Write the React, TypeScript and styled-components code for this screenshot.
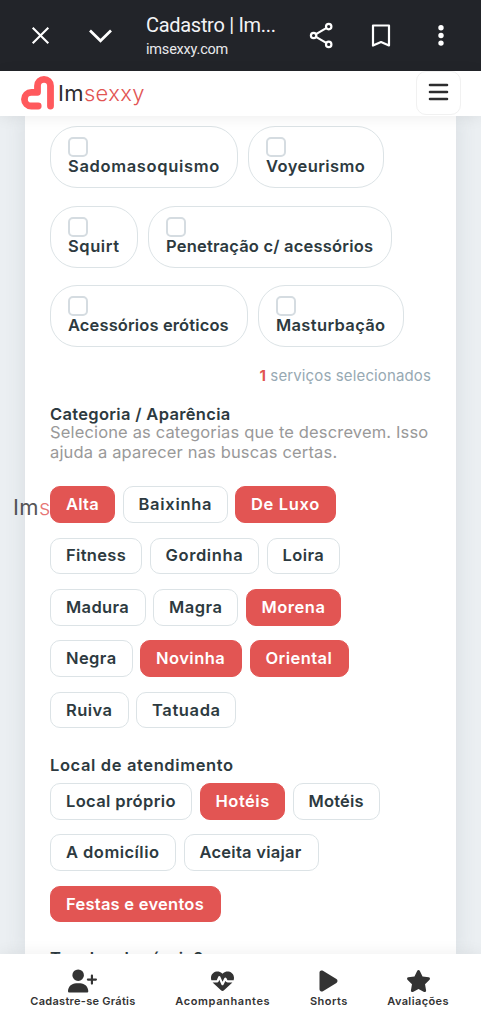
import React from 'react';
import styled, { createGlobalStyle } from 'styled-components';
import { FaUserPlus, FaHeartPulse, FaPlay, FaStar } from 'react-icons/fa6';

const Global = createGlobalStyle`
  *{box-sizing:border-box}
  body{margin:0;background:#ebeff2;font-family:Inter,"Open Sans",sans-serif;color:#2d3a40}
`;
const Screen = styled.div`width:481px;height:1024px;display:flex;flex-direction:column;overflow:hidden;position:relative;`;
const Bar = styled.header`height:71px;flex:none;background:#222429;display:flex;align-items:center;color:#fff;`;
const Glyph = styled.svg<{ $l: number }>`flex:none;margin-left:${p => p.$l}px;overflow:visible;`;
const Titles = styled.div`width:136px;margin-left:34px;font-family:Roboto,sans-serif;white-space:nowrap;`;
const PageTitle = styled.div`font-size:20px;line-height:24px;margin-top:4px;color:#f3f3f6;letter-spacing:-.3px;`;
const Url = styled.div`font-size:14.5px;line-height:26px;color:#e9e9ec;letter-spacing:-.2px;`;
const Head = styled.div`height:45px;flex:none;background:#fff;display:flex;justify-content:space-between;padding:0 20px;position:relative;z-index:1;box-shadow:0 2px 14px rgba(0,0,0,.07);`;
const Brand = styled.div`display:flex;align-items:flex-start;padding:4px 0 0 1px;`;
const Word = styled.span`display:block;font-size:22px;line-height:37px;font-weight:400;color:#2c2c2e;letter-spacing:.35px;margin-left:2px;white-space:nowrap;
  em{font-style:normal;font-weight:300;color:#e25553}`;
const MenuBtn = styled.button`width:45px;height:44px;padding:0 0 2px;border:1px solid #f1f1f1;border-radius:10px;background:#fff;display:flex;align-items:center;justify-content:center;`;
const Body = styled.main`flex:1;min-height:0;padding:0 25px;position:relative;`;
const Card = styled.section`background:#fff;height:838px;padding:10px 25px 0;box-shadow:0 0 20px rgba(70,90,105,.12);overflow:hidden;`;
const Services = styled.div`display:flex;flex-direction:column;gap:17.5px;`;
const Row = styled.div<{ $gap: number }>`display:flex;gap:${p => p.$gap}px;`;
const Service = styled.label<{ $w: number; $s: number }>`width:${p => p.$w}px;height:62px;border:1px solid #dce3e6;border-radius:27px;padding:10px 0 0 17px;font-size:16.5px;font-weight:600;line-height:19px;letter-spacing:${p => p.$s - .28}px;white-space:nowrap;
  i{display:block;width:20px;height:20px;border:2px solid #d5dce1;border-radius:5px;}`;
const Count = styled.p`margin:19px 0 0;text-align:right;font-size:15px;line-height:20px;color:#97a9b3;letter-spacing:.13px;b{color:#e25553}`;
const Heading = styled.h2<{ $top: number; $s: number }>`margin:${p => p.$top}px 0 0;font-size:16.5px;line-height:19px;font-weight:600;letter-spacing:${p => p.$s - .28}px;white-space:nowrap;`;
const Help = styled.p`margin:-1px 0 0;font-size:16.5px;line-height:19.5px;color:#999;white-space:nowrap;letter-spacing:.15px;
  span{display:block}`;
const Chips = styled.div<{ $top: number }>`margin-top:${p => p.$top}px;display:flex;flex-direction:column;gap:14.9px;`;
const Chip = styled.button<{ $w: number; $on?: boolean; $s: number }>`width:${p => p.$w}px;height:36.5px;padding:0 0 1px 15px;text-align:left;border-radius:10px;border:1px solid ${p => (p.$on ? '#e25553' : '#dce3e6')};background:${p => (p.$on ? '#e25553' : '#fff')};color:${p => (p.$on ? '#fff' : '#2d3a40')};font:600 16.5px Inter,sans-serif;letter-spacing:${p => p.$s - .28}px;white-space:nowrap;`;
const Ghost = styled.div`position:absolute;left:11px;top:373px;width:39px;overflow:hidden;opacity:.8;`;
const Nav = styled.nav`height:70px;flex:none;background:#fff;position:relative;z-index:1;box-shadow:0 -2px 14px rgba(0,0,0,.06);display:flex;padding:15px 0 0 23px;`;
const Tab = styled.a<{ $w: number; $s: number }>`width:${p => p.$w}px;display:flex;flex-direction:column;align-items:center;font-size:11px;font-weight:600;color:#333;letter-spacing:${p => p.$s}px;white-space:nowrap;line-height:14px;gap:1px;
  svg{height:24px;flex:none}`;

type C = [string, number, number, boolean?];
const services: C[][] = [
  [['Sadomasoquismo', 188, .94], ['Voyeurismo', 136, .7]],
  [['Squirt', 88, .85], ['Penetração c/ acessórios', 244, .48]],
  [['Acessórios eróticos', 198, .4], ['Masturbação', 146, .62]],
];
const looks: C[][] = [
  [['Alta', 65, .55, true], ['Baixinha', 105, 1], ['De Luxo', 100.5, .94, true]],
  [['Fitness', 92, .6], ['Gordinha', 109.5, .9], ['Loira', 73, .7]],
  [['Madura', 95.5, .65], ['Magra', 85, .8], ['Morena', 95.5, .8, true]],
  [['Negra', 82.5, .7], ['Novinha', 102, .75, true], ['Oriental', 99.5, .7, true]],
  [['Ruiva', 78.5, .7], ['Tatuada', 100, .9]],
];
const places: C[][] = [
  [['Local próprio', 142, .65], ['Hotéis', 85.5, .8, true], ['Motéis', 87.5, .5]],
  [['A domicílio', 126, .75], ['Aceita viajar', 135, .53]],
  [['Festas e eventos', 170.5, .53, true]],
];
const ChipRows = ({ rows, top }: { rows: C[][]; top: number }) => (
  <Chips $top={top}>{rows.map((r, i) => <Row $gap={7.5} key={i}>{r.map(([t, w, s, on]) => <Chip key={t} $w={w} $s={s} $on={on}><span>{t}</span></Chip>)}</Row>)}</Chips>
);

export default function App() {
  return (
    <Screen>
      <Global />
      <Bar>
        <Glyph $l={32} width="17" height="17" viewBox="0 0 17 17" stroke="#fff" strokeWidth="2.1"><path d="M.7.7l15.6 15.6M16.3.7L.7 16.3" /></Glyph>
        <Glyph $l={40} width="23" height="14" viewBox="0 0 23 14" fill="none" stroke="#fff" strokeWidth="2.7"><path d="M1 1.5l10.5 10.3L22 1.5" /></Glyph>
        <Titles><PageTitle>Cadastro | Im...</PageTitle><Url>imsexxy.com</Url></Titles>
        <Glyph $l={28} width="23" height="25" viewBox="0 0 23 25" fill="none" stroke="#fff" strokeWidth="2.2"><circle cx="18.7" cy="3.6" r="2.7" /><circle cx="3.6" cy="12.5" r="2.7" /><circle cx="18.7" cy="21.4" r="2.7" /><path d="M16.2 5.1L6 11.1M6 13.9l10.2 6" /></Glyph>
        <Glyph $l={39} width="18" height="22" viewBox="0 0 18 22" fill="none" stroke="#fff" strokeWidth="2.2" strokeLinejoin="round"><path d="M1 .5h16v20l-8-3.5-8 3.5z" /></Glyph>
        <Glyph $l={48} width="6" height="21" viewBox="0 0 6 21" fill="#fff"><circle cx="3" cy="2.8" r="2.7" /><circle cx="3" cy="10.5" r="2.7" /><circle cx="3" cy="18.1" r="2.7" /></Glyph>
      </Bar>
      <Head>
        <Brand>
          <svg width="35" height="35" viewBox="0 0 35 35" fill="none" stroke="#ff595d" strokeWidth="6.8" strokeLinecap="round" strokeLinejoin="round"><path d="M17.2 31H10.3a6.85 6.85 0 0 1 0-13.7h6.2v-6.5a6.5 6.5 0 0 1 13 0V31" /></svg>
          <Word>Im<em>sexxy</em></Word>
        </Brand>
        <MenuBtn><svg width="21" height="18" viewBox="0 0 21 18" stroke="#2c2c2e" strokeWidth="2.6" strokeLinecap="round"><path d="M2 2h17M2 9h17M2 16h17" /></svg></MenuBtn>
      </Head>
      <Body>
        <Ghost><Word>Im<em>sexxy</em></Word></Ghost>
        <Card>
          <Services>{services.map((r, i) => <Row $gap={10} key={i}>{r.map(([t, w, s]) => <Service key={t} $w={w} $s={s}><i /><span>{t}</span></Service>)}</Row>)}</Services>
          <Count><b>1</b> <span>serviços selecionados</span></Count>
          <Heading $top={19} $s={.6}>Categoria / Aparência</Heading>
          <Help><span>Selecione as categorias que te descrevem. Isso</span><span>ajuda a aparecer nas buscas certas.</span></Help>
          <ChipRows rows={looks} top={24.3} />
          <Heading $top={27.7} $s={.9}>Local de atendimento</Heading>
          <ChipRows rows={places} top={8} />
          <Heading $top={27} $s={.6}>Tem local próprio?</Heading>
        </Card>
      </Body>
      <Nav>
        <Tab $w={121} $s={.28}><FaUserPlus size={29} /><span>Cadastre-se Grátis</span></Tab>
        <Tab $w={161} $s={.62}><FaHeartPulse size={23} /><span>Acompanhantes</span></Tab>
        <Tab $w={53} $s={.45}><FaPlay size={23} /><span>Shorts</span></Tab>
        <Tab $w={127} $s={.4}><FaStar size={25} style={{ height: 24 }} /><span>Avaliações</span></Tab>
      </Nav>
    </Screen>
  );
}
